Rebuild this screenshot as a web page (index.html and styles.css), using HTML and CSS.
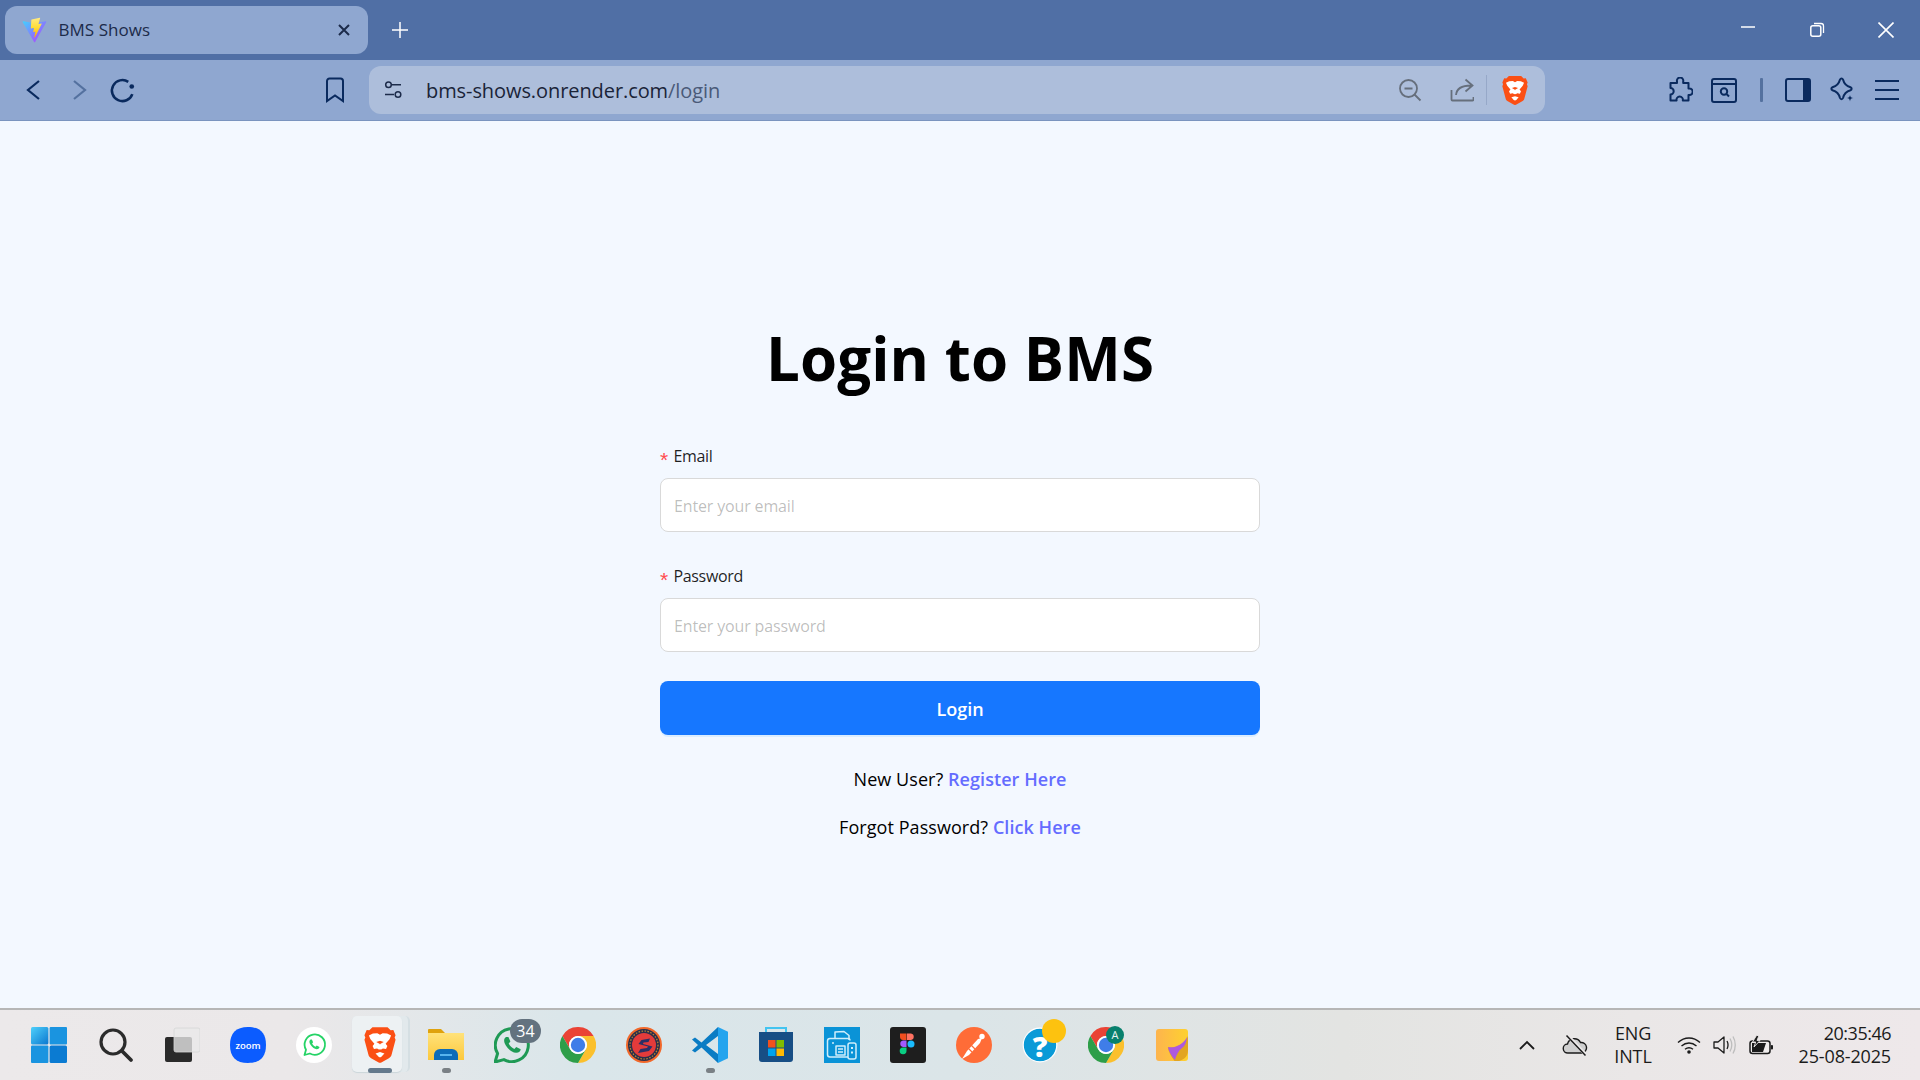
FILE: index.html
```html
<!DOCTYPE html>
<html lang="en">
<head>
<meta charset="utf-8">
<title>BMS Shows</title>
<link rel="stylesheet" href="styles.css">
</head>
<body>
<svg class="defs" width="0" height="0" aria-hidden="true">
  <defs>
    <symbol id="brave-half" viewBox="0 0 36 40">
      <path fill="#fff" d="M18 8.500l-3-1.800-5 .5-4.500 2 1.800 4.300 4.400 5-2 2.500 1.500 3.500 3.500-.7 2.500 1.500 1.300-1.300-.7-5-4-2.500 4.300-1.200.2-4z"/>
    </symbol>
    <symbol id="brave" viewBox="0 0 36 40">
      <path fill="#fb4f14" d="M9.500 0H26.500L30 3.500 33 3l2.500 6-1 2.500 1 2.500L31 31c-.5 2-1.500 3-3 4l-8 4.500c-1.500.8-2.500.8-4 0L8 35c-1.500-1-2.500-2-3-4L.5 14l1-2.500-1-2.500L3 3l3 .5z"/>
      <use href="#brave-half" width="36" height="40"/>
      <g transform="matrix(-1 0 0 1 36 0)"><use href="#brave-half" width="36" height="40"/></g>
      <path fill="#fff" d="M18 28l-5 1.500 3.200 3.500 1.800 1 1.800-1 3.200-3.500z"/>
    </symbol>
    <symbol id="chrome" viewBox="0 0 36 36">
      <path fill="#ea4335" d="M33.590 9A18 18 0 0 0 2.410 9l7.800 13.500A9 9 0 0 1 18 9z"/>
      <path fill="#fbc02d" d="M33.590 9A18 18 0 0 1 18 36l7.790-13.500A9 9 0 0 0 18 9z"/>
      <path fill="#2e9e49" d="M2.410 9A18 18 0 0 0 18 36l7.790-13.500a9 9 0 0 1-15.580 0z"/>
      <circle cx="18" cy="18" r="9" fill="#fff"/>
      <circle cx="18" cy="18" r="7.200" fill="#3f7de8"/>
    </symbol>
    <linearGradient id="viteA" x1="0" y1="0" x2="1" y2="1">
      <stop offset="0" stop-color="#41d1ff"/><stop offset="1" stop-color="#bd34fe"/>
    </linearGradient>
    <linearGradient id="viteB" x1="0" y1="0" x2="0" y2="1">
      <stop offset="0" stop-color="#ffea83"/><stop offset=".5" stop-color="#ffdd35"/><stop offset="1" stop-color="#ffa800"/>
    </linearGradient>
    <linearGradient id="winA" x1="0" y1="0" x2="1" y2="1">
      <stop offset="0" stop-color="#4fd0fb"/><stop offset="1" stop-color="#0a78d0"/>
    </linearGradient>
    <linearGradient id="folderA" x1="0" y1="0" x2="0" y2="1">
      <stop offset="0" stop-color="#ffe27a"/><stop offset="1" stop-color="#fcc83c"/>
    </linearGradient>
    <linearGradient id="stickyA" x1="0" y1="0" x2="1" y2="0">
      <stop offset="0" stop-color="#fdb44e"/><stop offset="1" stop-color="#fed12f"/>
    </linearGradient>
  </defs>
</svg>

<header class="chrome">
  <div class="tabstrip">
    <div class="tab">
      <svg class="favicon" viewBox="0 0 32 32" width="27" height="27"><path fill="url(#viteA)" d="M29.884 6.146L16.742 29.646c-.271.485-.968.488-1.244.005L2.096 6.148c-.3-.526.15-1.164.746-1.057l13.156 2.352a.7.7 0 0 0 .254 0l12.881-2.348c.594-.108 1.046.524.751 1.053z"/><path fill="url(#viteB)" d="M22.264 1.013l-9.725 1.905a.357.357 0 0 0-.288.33l-.598 10.103c-.014.238.204.423.436.37l2.708-.625c.253-.059.482.164.43.419l-.804 3.94c-.054.264.195.491.453.412l1.673-.508c.259-.079.508.149.453.414l-1.278 6.188c-.08.387.435.598.649.266l.144-.222 7.924-15.814c.133-.265-.096-.567-.387-.511l-2.787.538c-.262.05-.485-.194-.411-.45l1.819-6.305c.074-.257-.15-.501-.412-.45z"/></svg>
      <span class="tab-title">BMS Shows</span>
      <svg class="tab-close" viewBox="0 0 12 12" width="12" height="12"><path d="M1 1l10 10M11 1L1 11" stroke="#1c2b4a" stroke-width="2" fill="none"/></svg>
    </div>
    <svg class="newtab" viewBox="0 0 16 16" width="16" height="16"><path d="M8 0v16M0 8h16" stroke="#fff" stroke-width="1.500"/></svg>
    <div class="winctrls">
      <div class="winbtn"><svg viewBox="0 0 16 16" width="16" height="16"><path d="M1 5h14" stroke="#fff" stroke-width="1.500"/></svg></div>
      <div class="winbtn"><svg viewBox="0 0 16 16" width="16" height="16"><rect x="1.800" y="3.800" width="10" height="10.500" rx="2" fill="none" stroke="#fff" stroke-width="1.500"/><path d="M5 1.500h7a2.500 2.500 0 0 1 2.500 2.500v7" fill="none" stroke="#fff" stroke-width="1.300"/></svg></div>
      <div class="winbtn"><svg viewBox="0 0 16 16" width="16" height="16"><path d="M.5.5l15 15M15.500.5l-15 15" stroke="#fff" stroke-width="1.600"/></svg></div>
    </div>
  </div>
  <div class="toolbar">
    <div class="tbtn"><svg viewBox="0 0 24 24" width="24" height="24"><path d="M17 3L6 12l11 9" class="ic"/></svg></div>
    <div class="tbtn"><svg viewBox="0 0 24 24" width="24" height="24"><path d="M7 3l11 9-11 9" class="ic ic-dim"/></svg></div>
    <div class="tbtn"><svg viewBox="0 0 24 24" width="28" height="28"><path d="M20 15.500A9 9 0 1 1 16.500 5" class="ic"/><circle cx="19.500" cy="9" r="2" fill="#0a2a5e"/></svg></div>
    <div class="tbtn tbtn-bookmark"><svg viewBox="0 0 20 26" width="20" height="26"><path d="M2 4a2.500 2.500 0 0 1 2.500-2.500h11A2.500 2.500 0 0 1 18 4v20l-8-5.500L2 24z" class="ic ic-thin"/></svg></div>
    <div class="omnibox">
      <div class="site"><svg viewBox="0 0 18 18" width="18" height="18"><circle cx="4.500" cy="3.800" r="2.800" class="ic-s"/><path d="M8 3.800h9M1 13.500h9" class="ic-s"/><circle cx="14" cy="13.500" r="2.800" class="ic-s"/></svg></div>
      <div class="url">bms-shows.onrender.com<span class="url-path">/login</span></div>
      <div class="omni-actions">
        <svg class="zoomout" viewBox="0 0 24 24" width="24" height="24"><circle cx="10.500" cy="10.500" r="8.500" class="ic-g"/><path d="M6.500 10.500h8M16.500 16.500l6 6" class="ic-g"/></svg>
        <svg class="share" viewBox="0 0 24 24" width="24" height="24"><path d="M1.500 12v9.500a1 1 0 0 0 1 1h20a1 1 0 0 0 1-1V19M6 17c.5-6 5-9.500 15-9.500M15.500 1.500l7 6-7 6" class="ic-g"/></svg>
        <span class="omni-sep"></span>
        <svg class="omni-brave" width="26" height="29"><use href="#brave"/></svg>
      </div>
    </div>
    <div class="toolright">
      <div class="tbtn"><svg viewBox="0 0 26 26" width="26" height="26"><path d="M10 4.500a3.200 3.200 0 1 1 6.200 0v1.500h5.300v5.600h1a3.200 3.200 0 0 1 0 6.400h-1v5.500h-5.700a3.200 3.200 0 1 0-6.200 0H3.500v-6a3.200 3.200 0 1 0 0-6.400V6H10z" class="ic ic-thin" stroke-linejoin="round"/></svg></div>
      <div class="tbtn"><svg viewBox="0 0 26 26" width="26" height="26"><rect x="1" y="2" width="24" height="23" rx="2" class="ic ic-thin"/><path d="M1 7h24" class="ic ic-thin"/><circle cx="13" cy="14.500" r="3.200" class="ic ic-thin"/><path d="M15.500 17l2.500 2.500" class="ic ic-thin"/></svg></div>
      <span class="toolsep"></span>
      <div class="tbtn"><svg viewBox="0 0 26 26" width="26" height="26"><rect x="1" y="2" width="24" height="22" rx="2" class="ic ic-thin"/><path d="M18 2h5a2 2 0 0 1 2 2v18a2 2 0 0 1-2 2h-5z" fill="#0a2a5e"/></svg></div>
      <div class="tbtn"><svg viewBox="0 0 26 26" width="26" height="26"><path d="M11 2.500c.6-1.500 2.400-1.500 3 0 1 4 3 6.500 7.500 7.800 1.500.6 1.500 2.400 0 3-4.500 1.300-6.500 3.500-7.500 7.700-.6 1.500-2.400 1.500-3 0-1-4.200-3-6.400-7.500-7.700-1.500-.6-1.500-2.400 0-3 4.500-1.300 6.500-3.800 7.500-7.800z" class="ic ic-thin" stroke-linejoin="round"/><path d="M21 18c.3 2 .9 2.600 3.500 3-2.600.4-3.200 1-3.500 3.500-.3-2.500-.9-3.100-3.500-3.500 2.600-.4 3.200-1 3.500-3z" fill="#0a2a5e"/></svg></div>
      <div class="tbtn"><svg viewBox="0 0 26 22" width="26" height="22"><path d="M1 2h24M1 11h24M1 20h24" class="ic ic-thin"/></svg></div>
    </div>
  </div>
</header>

<main class="page">
  <h1 class="title">Login to BMS</h1>
  <form class="form">
    <div class="field">
      <label class="label"><span class="req">*</span>Email</label>
      <input class="input" type="text" placeholder="Enter your email">
    </div>
    <div class="field field-last">
      <label class="label"><span class="req">*</span>Password</label>
      <input class="input" type="password" placeholder="Enter your password">
    </div>
    <button class="submit" type="button">Login</button>
    <p class="line">New User? <a href="#" class="link">Register Here</a></p>
    <p class="line">Forgot Password? <a href="#" class="link">Click Here</a></p>
  </form>
</main>

<footer class="taskbar">
  <div class="tb-item tb-start"><svg viewBox="0 0 36 36" width="36" height="36"><rect x="0" y="0" width="17.400" height="17.400" rx="1.500" fill="url(#winA)"/><rect x="18.600" y="0" width="17.400" height="17.400" rx="1" fill="#1a94e0"/><rect x="0" y="18.600" width="17.400" height="17.400" rx="1" fill="#1a94e0"/><rect x="18.600" y="18.600" width="17.400" height="17.400" rx="1.500" fill="#0b7bd2"/></svg></div>
  <div class="tb-item"><svg viewBox="0 0 36 36" width="36" height="36"><circle cx="15" cy="15" r="12" fill="none" stroke="#2b2b2b" stroke-width="3.200"/><path d="M24 24l9 9" stroke="#2b2b2b" stroke-width="3.800" stroke-linecap="round"/></svg></div>
  <div class="tb-item"><svg viewBox="0 0 36 36" width="36" height="36"><rect x="1" y="10" width="27" height="25" rx="2" fill="#2a2a2a"/><rect x="10" y="1" width="26" height="24" rx="2" fill="#e9e9e9" fill-opacity=".78" stroke="#d6d6d6" stroke-width=".8"/></svg></div>
  <div class="tb-item"><svg viewBox="0 0 36 36" width="36" height="36"><path fill="#0b5cff" d="M18 0c12 0 18 6 18 18s-6 18-18 18S0 30 0 18 6 0 18 0z"/><text x="18" y="21.500" class="zoomword" text-anchor="middle">zoom</text></svg></div>
  <div class="tb-item"><svg viewBox="0 0 36 36" width="36" height="36"><circle cx="18" cy="18" r="18" fill="#fff"/><path d="M8.500 28l1.500-5.300a10.200 10.200 0 1 1 3.900 3.800z" fill="none" stroke="#25d366" stroke-width="1.800" stroke-linejoin="round"/><path d="M14.500 12.500c-1.500 1-1.500 3 0 5.300 1.800 2.700 4.300 4.500 6.300 4.400 1.600 0 2.700-1 2.700-2.200l-2.800-1.400-1.100 1.200c-1.400-.5-2.800-1.900-3.500-3.300l1-1.200-1.200-2.800z" fill="#25d366"/></svg></div>
  <div class="tb-item tb-active"><svg width="32" height="36"><use href="#brave"/></svg><span class="tb-bar"></span></div>
  <div class="tb-item"><svg viewBox="0 0 36 36" width="36" height="36"><path d="M0 3a1 1 0 0 1 1-1h12l4 4h19v3H0z" fill="#dfa20e"/><path d="M0 6h36v27H0z" fill="url(#folderA)"/><path d="M6 33v-5a6 6 0 0 1 6-6h12a6 6 0 0 1 6 6v5z" fill="#0d6cb8"/><path d="M12 28h12" stroke="#58b4ee" stroke-width="2"/></svg><span class="tb-dot"></span></div>
  <div class="tb-item"><svg viewBox="0 0 36 36" width="36" height="36"><path d="M1 35l2.600-8.500a16.500 16.500 0 1 1 6.300 6.100z" fill="none" stroke="#1f9a55" stroke-width="3" stroke-linejoin="round"/><path d="M12 10c-2.500 1.600-2.500 5 0 8.700 3 4.400 7 7.300 10.300 7.100 2.600 0 4.400-1.600 4.400-3.500l-4.500-2.300-1.800 2c-2.300-.8-4.600-3.100-5.700-5.400l1.700-2-2-4.500z" fill="#1f9a55"/></svg><span class="badge">34</span></div>
  <div class="tb-item"><svg width="36" height="36"><use href="#chrome"/></svg></div>
  <div class="tb-item"><svg viewBox="0 0 36 36" width="36" height="36"><circle cx="18" cy="18" r="18" fill="#f2682a"/><circle cx="18" cy="18" r="16" fill="#2b2f4a"/><circle cx="18" cy="18" r="14" fill="none" stroke="#c58a2e" stroke-width="1.200" stroke-dasharray="1.500 1.500"/><circle cx="18" cy="18" r="12" fill="#e33b3b"/><path d="M24 11.500l-8.500 1.500-3 4 9.500 2.500-1 1.500-6.500 1-2.500 4 11-2 3.500-4.500-9.500-2.500.5-1.500 5-.5z" fill="#2b2f66"/></svg></div>
  <div class="tb-item tb-vscode"><svg viewBox="0 0 36 36" width="36" height="36"><path d="M26 0l10 4.800v26.400L26 36z" fill="#24a4ee"/><path d="M26 0L9.500 15.500 3 10.500 0 12.500l6 5.500-6 5.500 3 2L9.500 20.500 26 36v-9L14 18l12-9z" fill="#0a7cc4"/></svg><span class="tb-dot"></span></div>
  <div class="tb-item"><svg viewBox="0 0 36 36" width="36" height="36"><path d="M8 6V1h20v5" fill="none" stroke="#43c4f0" stroke-width="2"/><path d="M1 5h34v27a3 3 0 0 1-3 3H4a3 3 0 0 1-3-3z" fill="#174e85"/><rect x="10" y="13" width="7.500" height="7.500" fill="#f0511e"/><rect x="18.500" y="13" width="7.500" height="7.500" fill="#80bb01"/><rect x="10" y="21.500" width="7.500" height="7.500" fill="#00a3ee"/><rect x="18.500" y="21.500" width="7.500" height="7.500" fill="#ffb902"/></svg></div>
  <div class="tb-item"><svg viewBox="0 0 36 36" width="36" height="36"><rect width="36" height="36" fill="#0a93d7"/><g fill="none" stroke="#cfeefb" stroke-width="1.500" stroke-linejoin="round"><path d="M11 11V5l9-.5 5 4V13"/><path d="M24 30H6a2.500 2.500 0 0 1-2.500-2.500V14A2.500 2.500 0 0 1 6 11.500h18a2 2 0 0 1 2 2"/><rect x="24" y="16" width="8" height="16" rx="2"/><path d="M12 19h9v9h-9zM14 22h5M14 25h5M8 16h2"/></g><path d="M28 20v2M28 24.500v2" stroke="#cfeefb" stroke-width="2"/></svg></div>
  <div class="tb-item"><svg viewBox="0 0 36 36" width="36" height="36"><rect width="36" height="36" rx="3" fill="#1e1e1e"/><path d="M10 6.500h6.500v6.500H13a3.300 3.300 0 0 1-3-3.300z" fill="#f24e1e"/><path d="M17 6.500h4a3.300 3.300 0 0 1 0 6.500h-4z" fill="#ff7262"/><path d="M13 13.500h3.500V20H13a3.300 3.300 0 0 1 0-6.500z" fill="#a259ff"/><circle cx="21" cy="17" r="3.500" fill="#1abcfe"/><path d="M13 20.500h3.500v3.300a3.400 3.400 0 1 1-3.500-3.300z" fill="#0acf83"/></svg></div>
  <div class="tb-item"><svg viewBox="0 0 36 36" width="36" height="36"><circle cx="18" cy="18" r="18" fill="#ff6c37"/><path d="M6 32l7-4 11-12 2-5-4 1-11 12z" fill="#fff"/><circle cx="26" cy="9.500" r="2.700" fill="#fff"/><path d="M12 21l4 4M15 18l4 4" stroke="#ff6c37" stroke-width="1.200"/></svg></div>
  <div class="tb-item"><svg viewBox="0 0 36 36" width="36" height="36"><circle cx="18" cy="18" r="16.800" fill="#0a9ad7" stroke="#fff" stroke-width="1.200"/><text x="18" y="29.500" class="helpmark" text-anchor="middle">?</text></svg><span class="dot-badge"></span></div>
  <div class="tb-item"><svg width="36" height="36"><use href="#chrome"/></svg><span class="profile">A</span></div>
  <div class="tb-item"><svg viewBox="0 0 32 32" width="32" height="32"><rect width="32" height="32" rx="3" fill="url(#stickyA)"/><path d="M32 7v14c0 6-3 9-9 11h-4.500C15 27 12 22 12 18c6 2 16-2 20-11z" fill="#e2a522"/><path d="M31 8c-4 8-13 11.500-19 10 .5 4 3 8.500 7 13 1-4 3-9 7-12 3-2 4.500-6 5-11z" fill="#ad58e0"/></svg></div>

  <div class="tray">
    <div class="tray-item tray-48"><svg viewBox="0 0 18 12" width="18" height="12"><path d="M2 10l7-7 7 7" fill="none" stroke="#1b1b1b" stroke-width="1.800"/></svg></div>
    <div class="tray-item tray-48"><svg viewBox="0 0 26 22" width="26" height="22"><path d="M6 19a4.500 4.500 0 0 1-.5-9 7 7 0 0 1 13-1.500 5 5 0 0 1 1.500 10.500z" fill="#cfcfcf" stroke="#1b1b1b" stroke-width="1.400"/><path d="M5.500 1.500l18 19" stroke="#ebe8e8" stroke-width="3.400"/><path d="M4.500 1.500l19 20" stroke="#1b1b1b" stroke-width="1.500"/></svg></div>
    <div class="lang"><span>ENG</span><span>INTL</span></div>
    <div class="tray-item tray-36 wifi"><svg viewBox="0 0 24 18" width="24" height="18"><path d="M1 6.500c6.500-6 15.500-6 22 0M4.500 10c4.500-4 10.500-4 15 0M8 13.300c2.500-2 5.500-2 8 0" fill="none" stroke="#1b1b1b" stroke-width="1.400"/><circle cx="12" cy="16" r="1.800" fill="#1b1b1b"/></svg></div>
    <div class="tray-item tray-36"><svg viewBox="0 0 24 20" width="24" height="20"><path d="M1 7h4l6-5v16l-6-5H1z" fill="none" stroke="#1b1b1b" stroke-width="1.300" stroke-linejoin="round"/><path d="M14 6c1.300 2.500 1.300 5.500 0 8" fill="none" stroke="#1b1b1b" stroke-width="1.300"/><path d="M17 3.500c2.200 4 2.200 9 0 13M20 1.500c3 5 3 12 0 17" fill="none" stroke="#bdbdbd" stroke-width="1.300"/></svg></div>
    <div class="tray-item tray-36"><svg viewBox="0 0 24 20" width="24" height="20"><rect x="1" y="6" width="20" height="12.500" rx="2.500" fill="#f0eded" stroke="#1b1b1b" stroke-width="1.500"/><path d="M3 8h14l-3 9H3z" fill="#1b1b1b"/><rect x="21.800" y="10" width="2.200" height="4.500" rx="1" fill="#1b1b1b"/><path d="M7.500.5L3.500 7h3.200L5 12l6-6.500H8l2-5z" fill="#1b1b1b" stroke="#ebe8e8" stroke-width=".9"/></svg></div>
    <div class="clock"><span class="clock-time">20:35:46</span><span>25-08-2025</span></div>
  </div>
</footer>
</body>
</html>
```

FILE: styles.css
```css
* { box-sizing: border-box; }
html, body { margin: 0; height: 100%; }
body {
  width: 1920px;
  height: 1080px;
  overflow: hidden;
  display: flex;
  flex-direction: column;
  font-family: "Open Sans", "Noto Sans", "Liberation Sans", sans-serif;
  background: #f3f8ff;
  color: #000;
}
.defs { position: absolute; }

/* browser chrome */
.tabstrip {
  height: 60px;
  background: #506fa5;
  display: flex;
  align-items: center;
  padding-left: 5px;
}
.tab {
  width: 363px;
  height: 48px;
  background: #8fa7d0;
  border-radius: 12px;
  display: flex;
  align-items: center;
  padding-left: 15.500px;
  padding-right: 18px;
}
.favicon { flex: none; }
.tab-title {
  margin-left: 11px;
  font-size: 17px;
  letter-spacing: .05px;
  color: #1c2b4a;
  flex: 1;
  margin-top: -1px;
}
.newtab { margin-left: 24px; }
.winctrls { margin-left: auto; display: flex; }
.winbtn { width: 69px; display: flex; justify-content: center; }

.toolbar {
  height: 61px;
  background: #8fa7d0;
  border-bottom: 1px solid #7a94bf;
  display: flex;
  align-items: center;
  padding-left: 12px;
  padding-right: 11px;
}
.tbtn {
  width: 44.500px;
  height: 44px;
  flex: none;
  display: flex;
  align-items: center;
  justify-content: center;
}
.tbtn-bookmark { margin-left: 167px; }
.ic { fill: none; stroke: #0a2a5e; stroke-width: 2.200; }
.ic-dim { stroke: #54719f; }
.ic-thin { stroke-width: 2; }
.ic-s { fill: none; stroke: #1c2b4a; stroke-width: 1.500; }
.ic-g { fill: none; stroke: #666f7c; stroke-width: 1.800; }

.omnibox {
  width: 1176px;
  height: 48px;
  margin-left: 12px;
  background: #adbedb;
  border-radius: 12px;
  display: flex;
  align-items: center;
  flex: none;
}
.site { width: 48px; display: flex; justify-content: center; flex: none; }
.url {
  margin-left: 9px;
  font-size: 20px;
  letter-spacing: -.08px;
  color: #1a2438;
}
.url-path { color: #4a5a78; }
.omni-actions { margin-left: auto; display: flex; align-items: center; padding-right: 17px; }
.share { margin-left: 28px; }
.omni-sep { width: 1px; height: 30px; background: #96a8c8; margin-left: 12px; margin-right: 15px; }

.toolright { margin-left: auto; display: flex; align-items: center; }
.toolsep { width: 3px; height: 24px; background: #54719f; border-radius: 1px; margin: 0 13px 0 13px; flex: none; }

/* page */
.page {
  flex: 1;
  padding-top: 197px;
  display: flex;
  flex-direction: column;
  align-items: center;
}
.title {
  margin: 0;
  font-size: 60px;
  line-height: 80px;
  font-weight: 700;
  letter-spacing: .1px;
  text-align: center;
}
.form { width: 600px; margin-top: 46px; display: flex; flex-direction: column; }
.field { display: flex; flex-direction: column; margin-bottom: 32px; }
.field-last { margin-bottom: 29px; }
.label {
  height: 24px;
  line-height: 24px;
  font-size: 16px;
  letter-spacing: -.3px;
  margin-bottom: 10px;
  color: rgba(0, 0, 0, .88);
}
.req {
  color: #ff4d4f;
  font-size: 21px;
  line-height: 1;
  margin-right: 5.500px;
  vertical-align: -5px;
  font-family: "Liberation Sans", sans-serif;
}
.input {
  width: 100%;
  height: 54px;
  padding: 2px 13px 0;
  border: 1px solid #d9d9d9;
  border-radius: 8px;
  background: #fff;
  font: 16px "Open Sans", sans-serif;
  letter-spacing: -.15px;
  outline: none;
}
.input::placeholder { color: rgba(0, 0, 0, .27); }
.submit {
  width: 100%;
  height: 54px;
  padding: 2px 0 0;
  border: 0;
  border-radius: 8px;
  background: #1677ff;
  box-shadow: 0 2px 0 rgba(5, 145, 255, .1);
  color: #fff;
  font: 600 18px "Open Sans", sans-serif;
  outline: none;
}
.line {
  margin: 0;
  margin-top: 24px;
  height: 24px;
  line-height: 24px;
  font-size: 18px;
  letter-spacing: .06px;
  text-align: center;
}
.submit + .line { margin-top: 32px; }
.link { color: #646cff; font-weight: 600; text-decoration: none; }

/* taskbar */
.taskbar {
  height: 72px;
  border-top: 2px solid #b6b6b6;
  background: linear-gradient(90deg, #ece9ea 0%, #ebe8e9 15%, #dae6ea 30%, #dbe5e8 50%, #e3e4e2 70%, #eae7e7 85%, #eee8ea 100%);
  display: flex;
  align-items: center;
  padding-left: 17px;
}
.tb-item {
  position: relative;
  width: 66px;
  height: 70px;
  flex: none;
  display: flex;
  align-items: center;
  justify-content: center;
}
.tb-start svg { margin-right: 3px; }
.tb-active::before {
  content: "";
  position: absolute;
  left: 5px;
  top: 6px;
  width: 56px;
  height: 56px;
  border-radius: 5px;
  background: #e2e9ec;
  border-right: 2px solid #d5dfe3;
}
.tb-active::after {
  content: "";
  position: absolute;
  left: 5px;
  top: 6px;
  width: 50px;
  height: 56px;
  border-radius: 5px;
  background: #edf1f3;
  box-shadow: 0 1px 1px #cbd6da;
}
.tb-active svg { position: relative; z-index: 1; }
.tb-bar {
  position: absolute;
  z-index: 2;
  left: 21px;
  bottom: 7px;
  width: 24px;
  height: 5px;
  border-radius: 3px;
  background: #64798c;
}
.tb-dot {
  position: absolute;
  left: 28.500px;
  bottom: 7px;
  width: 9px;
  height: 5px;
  border-radius: 3px;
  background: #7a8085;
}
.badge {
  position: absolute;
  left: 31px;
  top: 9px;
  width: 31px;
  height: 24px;
  border-radius: 12px;
  background: #63727f;
  color: #fff;
  font-size: 16px;
  line-height: 24px;
  text-align: center;
}
.dot-badge {
  position: absolute;
  left: 35px;
  top: 9px;
  width: 24px;
  height: 24px;
  border-radius: 50%;
  background: #fdc20f;
}
.profile {
  position: absolute;
  left: 33px;
  top: 16px;
  width: 18px;
  height: 18px;
  border-radius: 50%;
  background: #08806d;
  color: #e8f3f1;
  font-size: 11px;
  line-height: 18px;
  text-align: center;
}
.zoomword { font: 600 9.500px "Open Sans", sans-serif; fill: #fff; }
.helpmark { font: 800 29px "Open Sans", sans-serif; fill: #fff; }

.tray { margin-left: auto; display: flex; align-items: center; padding-right: 29px; }
.tray-item { display: flex; align-items: center; justify-content: center; flex: none; }
.tray-48 { width: 48px; }
.tray-36 { width: 36px; }
.wifi { margin-left: 4px; }
.lang, .clock {
  display: flex;
  flex-direction: column;
  font-size: 18px;
  line-height: 23.500px;
  letter-spacing: -.15px;
  color: #1b1b1b;
}
.lang { width: 68px; align-items: center; }
.clock { width: 112px; align-items: flex-end; }
.clock-time { letter-spacing: -.5px; }
```
